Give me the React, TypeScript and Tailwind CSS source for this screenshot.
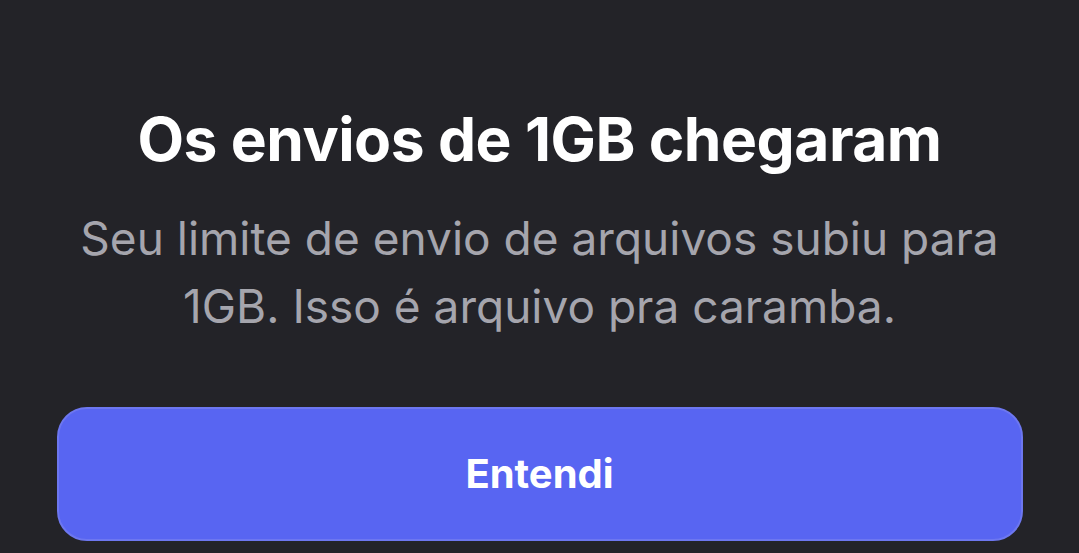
export default function App() {
  return (
    <div
      className="w-[1079px] h-[553px] overflow-hidden bg-[#232328] flex flex-col items-center"
      style={{ fontFamily: "Inter, 'Noto Sans', sans-serif" }}
    >
      <h1 className="mt-[99px] text-[60.5px] leading-[80px] font-bold text-white tracking-[-0.5px]">
        Os envios de 1GB chegaram
      </h1>
      <p className="mt-[25px] w-[1000px] text-center text-[46px] leading-[68px] text-[#a5a5ad]">
        Seu limite de envio de arquivos subiu para
        <br />
        1GB. Isso é arquivo pra caramba.
      </p>
      <button className="mt-[67px] w-[966px] h-[134px] rounded-[30px] bg-[#5865f2] border-2 border-[#6d77f0] text-white text-[40px] font-bold">
        Entendi
      </button>
    </div>
  );
}
